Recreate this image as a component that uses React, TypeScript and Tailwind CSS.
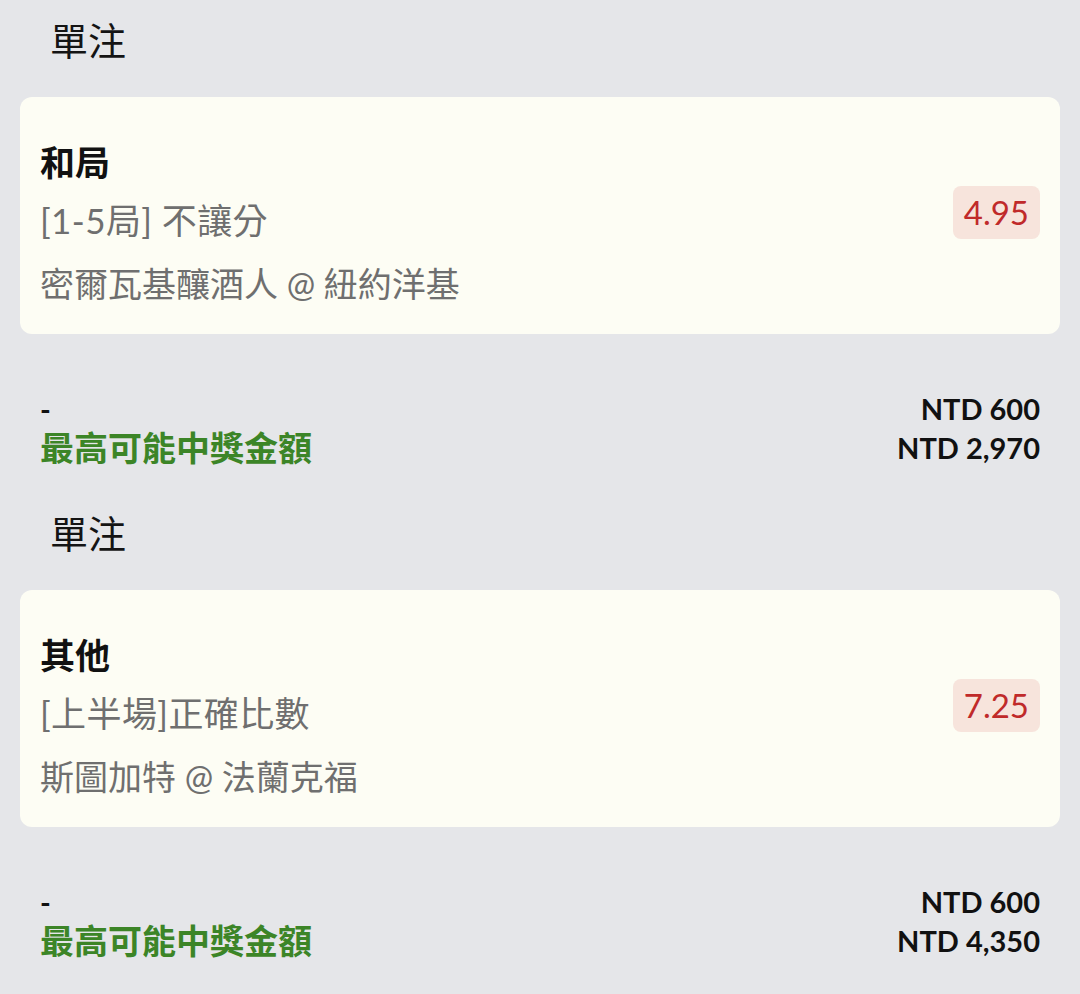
import React from "react";

type Bet = {
  name: string;
  market: string;
  match: string;
  odds: string;
  stake: string;
  win: string;
};

const bets: Bet[] = [
  {
    name: "和局",
    market: "[1-5局] 不讓分",
    match: "密爾瓦基釀酒人 @ 紐約洋基",
    odds: "4.95",
    stake: "NTD 600",
    win: "NTD 2,970",
  },
  {
    name: "其他",
    market: "[上半場]正確比數",
    match: "斯圖加特 @ 法蘭克福",
    odds: "7.25",
    stake: "NTD 600",
    win: "NTD 4,350",
  },
];

function Section({ bet }: { bet: Bet }) {
  return (
    <div className="pb-[26px]">
      <div className="h-20 flex items-center pl-[50px] text-[38px] text-[#141414]">單注</div>
      <div className="mt-[17px] mx-5 h-[237px] rounded-xl bg-[#fdfdf4] px-5 flex items-start justify-between">
        <div className="flex flex-col pt-[43px]">
          <div className="text-[35px] leading-[44px] font-bold text-[#111]">{bet.name}</div>
          <div className="mt-[14px] text-[35px] leading-[44px] text-[#6f6f6f] tracking-[0.4px]">{bet.market}</div>
          <div className="mt-[20px] text-[34px] leading-[44px] text-[#6f6f6f]">{bet.match}</div>
        </div>
        <div className="self-center h-[53px] px-[11px] rounded-lg bg-[#f7e4dc] flex items-center text-[33px] text-[#c02a2a] -mt-[6px]">
          {bet.odds}
        </div>
      </div>
      <div className="mt-[55px] px-10 flex justify-between">
        <div className="flex flex-col">
          <div className="h-[39px] leading-[39px] text-[29px] font-bold text-[#111]">-</div>
          <div className="h-[39px] leading-[39px] text-[34px] font-bold text-[#3c8527]">最高可能中獎金額</div>
        </div>
        <div className="flex flex-col items-end">
          <div className="h-[39px] leading-[39px] text-[29px] font-bold text-[#111]">{bet.stake}</div>
          <div className="h-[39px] leading-[39px] text-[29px] font-bold text-[#111]">{bet.win}</div>
        </div>
      </div>
    </div>
  );
}

export default function App() {
  return (
    <div
      className="w-[1080px] h-[994px] overflow-hidden bg-[#e5e6e9]"
      style={{ fontFamily: 'Lato, "Noto Sans CJK TC", sans-serif' }}
    >
      {bets.map((b, i) => (
        <Section key={i} bet={b} />
      ))}
    </div>
  );
}
